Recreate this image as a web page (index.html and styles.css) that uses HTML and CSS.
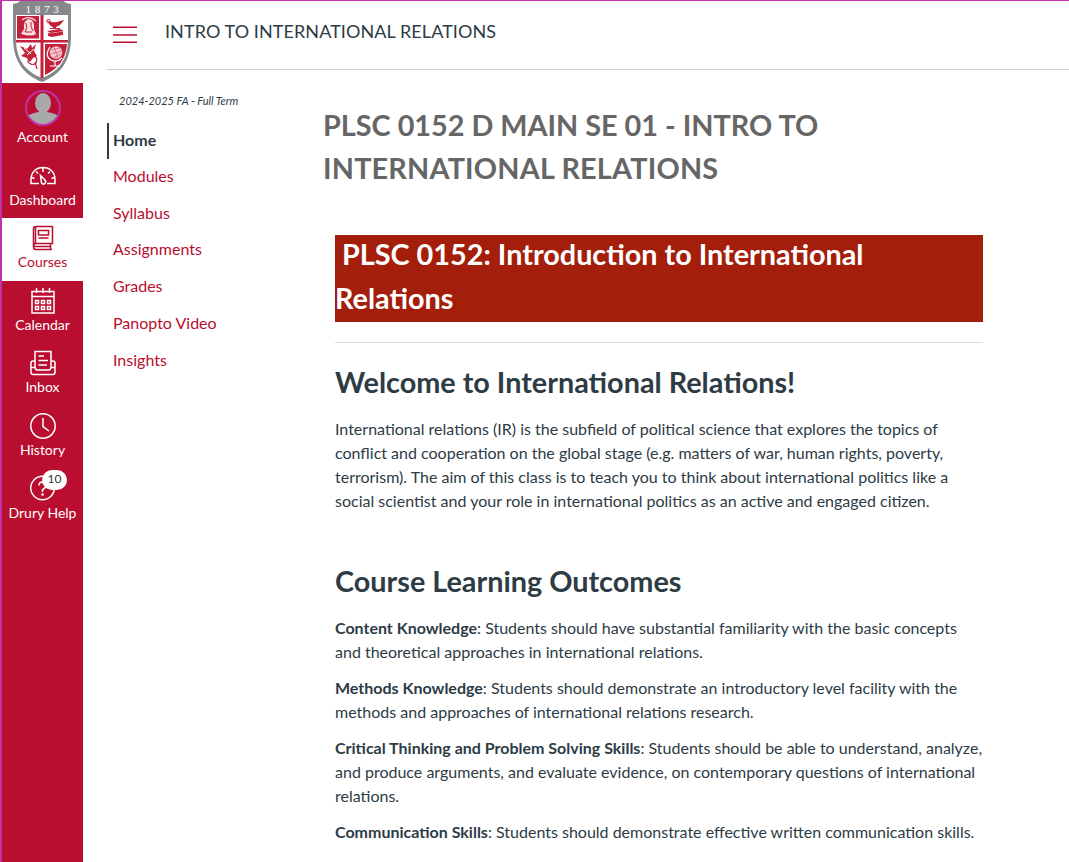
FILE: index.html
```html
<!DOCTYPE html>
<html lang="en">
<head>
<meta charset="utf-8">
<title>INTRO TO INTERNATIONAL RELATIONS</title>
<link rel="stylesheet" href="styles.css">
</head>
<body>
<div class="app">
  <nav class="global-nav">
    <a class="logo">
      <svg width="60" height="82" viewBox="0 0 60 82">
        <path d="M1 3Q6 3 9-1H51Q54 3 59 3V36C59 62 47 74 30 81C13 74 1 62 1 36Z" fill="#87888c"/>
        <path d="M4 14H56V38C56 59 46 71 30 77C14 71 4 59 4 38Z" fill="#fff"/>
        <path d="M5 15H27V37.500H5ZM33 43H55C54 58 46 68 33 74Z" fill="#c3203a"/>
        <path d="M28.500 14H31.500V77H28.500ZM4 39H56V41.500H4Z" fill="#c3203a"/>
        <path d="M9 33L12 28Q11 19 17 18Q23 19 22 28L24 33Q20 36 9 33Z" fill="#f8dce0"/>
        <path d="M10 19Q17 14 24 20M14 22Q16 27 13 31H21Q18 27 19 22" fill="none" stroke="#f8dce0" stroke-width="1.2"/>
        <path d="M14 22Q16 27 13 31H20M19 21Q18 26 21 30" fill="none" stroke="#c3203a"/>
        <path d="M36 20Q39 22 45 21L52 19Q50 22 48 24L44 26V27H48V28H38V27H41V26Q37 25 36 20ZM35 30L48 28L52 30L39 32ZM36 33L51 31V34L40 36L36 35Z" fill="#c3203a"/>
        <path d="M36 32L39 33L51 31" fill="none" stroke="#c3203a"/>
        <circle cx="36.500" cy="20" r="1.700" fill="none" stroke="#c3203a"/>
        <path d="M8 45L15 48L19 43L20 47L24 43L22 50L25 55L21 57L18 61L15 57L9 55L13 52Z" fill="#c3203a"/>
        <path d="M20 54Q27 56 24 62Q21 65 17 62Q15 60 17 57M23 61L25 68" fill="none" stroke="#c3203a" stroke-width="1.2"/>
        <path d="M12 47L19 53M15 54L22 48" stroke="#fff"/>
        <circle cx="44" cy="51.500" r="6.300" fill="#f3c9d0"/>
        <path d="M39 49L48 47M38.500 53L50 50M41 57L49 53M42 46L46 57" fill="none" stroke="#c3203a" stroke-width=".5"/>
        <path d="M38 46Q32 55 39 59Q45 62 50 57M43 60V65M38 65H48" fill="none" stroke="#fff" stroke-width="1.200"/>
        <text x="32" y="12" text-anchor="middle" class="logo-year">1873</text>
      </svg>
    </a>
    <a class="nav-item account">
      <svg width="36" height="36" viewBox="0 0 36 36">
        <defs><clipPath id="avatar"><circle cx="18" cy="18" r="17"/></clipPath></defs>
        <g clip-path="url(#avatar)" fill="#a9a9a9"><ellipse cx="18" cy="13" rx="8" ry="10"/><path d="M14 18H22V22Q33 24 34 27V36H2V27Q3 24 14 22Z"/></g>
        <circle cx="18" cy="18" r="17" fill="none" stroke="#bf32a4" stroke-width="2"/>
      </svg>
      <span>Account</span>
    </a>
    <a class="nav-item">
      <svg class="icon" width="26" height="26" viewBox="0 0 26 26">
        <path d="M9 21.500H1V17.500C1 10 6 5.500 13 5.500S25 10 25 17.500V21.500H17M13 6V10M6 9.500L8 11.500M20 9.500L18 11.500M2 15.500L4.500 16.500M24 15.500L21.500 16.500M10.500 13.500L15 18C17 21 13.500 23.500 11.500 21Z"/>
      </svg>
      <span>Dashboard</span>
    </a>
    <a class="nav-item active">
      <svg class="icon" width="26" height="26" viewBox="0 0 26 26">
        <path d="M22.500 1.500H6Q3.500 1.500 3.500 4V22Q3.500 24.500 6 24.500H22M5.500 1.500V18.500M6 18.500H22.500V1M6 18.500Q3.500 18.500 3.500 21.500M4 21.500H20M20.500 18.500V24.500M8.500 5.500H18.500V10H8.500ZM8.500 13H18.500"/>
      </svg>
      <span>Courses</span>
    </a>
    <a class="nav-item">
      <svg class="icon" width="26" height="26" viewBox="0 0 26 26">
        <path d="M2 3.500H24V25H2ZM2 8.500H24M6.500 0V5M13 0V5M19.500 0V5M5.500 12.500H8.500V15.500H5.500ZM11.500 12.500H14.500V15.500H11.500ZM17.500 12.500H20.500V15.500H17.500ZM5.500 18.500H8.500V21.500H5.500ZM11.500 18.500H14.500V21.500H11.500ZM17.500 18.500H20.500V21.500H17.500Z"/>
      </svg>
      <span>Calendar</span>
    </a>
    <a class="nav-item">
      <svg class="icon" width="26" height="26" viewBox="0 0 26 26">
        <path d="M5 17V1.500H21V17M5 11H3Q1 11 1 13V22Q1 24.500 3 24.500H23Q25 24.500 25 22V13Q25 11 23 11H21M1 17.500H5Q5.500 20 7.500 20H18.500Q20.500 20 21 17.500H25M8.500 6H14M8.500 10.500H18M8.500 15H17"/>
      </svg>
      <span>Inbox</span>
    </a>
    <a class="nav-item">
      <svg class="icon" width="26" height="26" viewBox="0 0 26 26">
        <circle cx="13" cy="13" r="12.200"/><path d="M13 5V13.500L19 18"/>
      </svg>
      <span>History</span>
    </a>
    <a class="nav-item help">
      <svg class="icon" width="26" height="26" viewBox="0 0 26 26">
        <circle cx="12.500" cy="13" r="11.800"/><path d="M9 10.500Q9 7 12.500 7T16 10.500Q16 12.500 14 13.500T12.500 16.500V17"/><circle class="dot" cx="12.500" cy="19.500" r="1.300"/>
      </svg>
      <span>Drury Help</span>
      <b class="badge">10</b>
    </a>
  </nav>
  <div class="page">
    <header class="topbar">
      <svg class="menu" width="24" height="18" viewBox="0 0 24 18">
        <path d="M0 1.200H24M0 9H24M0 16.200H24"/>
      </svg>
      <span class="crumb">INTRO TO INTERNATIONAL RELATIONS</span>
    </header>
    <div class="columns">
      <aside class="course-nav">
        <div class="term">2024-2025 FA - Full Term</div>
        <a class="current">Home</a>
        <a>Modules</a>
        <a>Syllabus</a>
        <a>Assignments</a>
        <a>Grades</a>
        <a>Panopto Video</a>
        <a>Insights</a>
      </aside>
      <main class="content">
        <h1 class="course-title">PLSC 0152 D MAIN SE 01 - INTRO TO <span class="title-end">INTERNATIONAL RELATIONS</span></h1>
        <div class="wiki">
          <div class="banner"><h2>&nbsp;PLSC 0152: Introduction to International Relations</h2></div>
          <hr>
          <h2>Welcome to International Relations!</h2>
          <p>International relations (IR) is the subfield of political science that explores the topics of conflict and cooperation on the global stage (e.g. matters of war, human rights, poverty, terrorism). The aim of this class is to teach you to think about international politics like a social scientist and your role in international politics as an active and engaged citizen.</p>
          <h2 class="outcomes">Course Learning Outcomes</h2>
          <p><strong>Content Knowledge</strong>: Students should have substantial familiarity with the basic concepts and theoretical approaches in international relations.</p>
          <p><strong>Methods Knowledge</strong>: Students should demonstrate an introductory level facility with the methods and approaches of international relations research.</p>
          <p><strong>Critical Thinking and Problem Solving Skills</strong>: Students should be able to understand, analyze, and produce arguments, and evaluate evidence, on contemporary questions of international relations.</p>
          <p><strong>Communication Skills</strong>: Students should demonstrate effective written communication skills.</p>
        </div>
      </main>
    </div>
  </div>
</div>
</body>
</html>
```
FILE: styles.css
```css
* { box-sizing: border-box; }
body { margin: 0; font-family: Lato, sans-serif; font-size: 16px; line-height: 24px; color: #2d3b45; background: #fff; }
.app { display: flex; height: 862px; overflow: hidden; border-left: 2px solid #bf32a4; border-top: 1px solid #bf32a4; }

.global-nav { width: 81px; flex: none; background: #b90e2f; }
.logo { display: block; height: 82px; padding-left: 10px; background: #fff; }
.logo svg { display: block; }
.logo-year { font: 11px "Liberation Serif", serif; letter-spacing: 3.8px; fill: #fff; }
.nav-item { position: relative; display: flex; flex-direction: column; align-items: center; height: 62.6px; padding-top: 7px; color: #fff; font-size: 14px; line-height: 17px; white-space: nowrap; }
.nav-item span { margin-top: 2.2px; }
.nav-item.account { height: 72.4px; }
.nav-item.account span { margin-top: 2px; }
.icon { fill: none; stroke: currentColor; stroke-width: 1.5; }
.icon .dot { fill: currentColor; stroke: none; }
.nav-item.active { background: #fff; color: #b90e2f; }
.badge { position: absolute; left: 40px; top: 1.6px; width: 25px; height: 20px; border-radius: 10px; background: #fff; color: #2d3b45; font-size: 12px; font-weight: 400; line-height: 18px; text-align: center; }

.page { flex: 1; padding-left: 24px; }
.topbar { display: flex; height: 69px; padding: 18px 0 0 6px; border-bottom: 1px solid #c7cdd1; }
.menu { margin-top: 7px; stroke: #b90e2f; stroke-width: 1.6; }
.crumb { margin-left: 28px; font-size: 18px; letter-spacing: .08px; }
.columns { display: flex; }
.course-nav { width: 192px; flex: none; padding-top: 22px; }
.term { padding-left: 12px; font-size: 11px; font-style: italic; line-height: 18px; margin-bottom: 13px; }
.course-nav a { display: block; height: 36px; margin-bottom: .7px; padding-left: 6px; line-height: 32px; color: #b90e2f; }
.course-nav .current { margin-bottom: 1.1px; padding-left: 4px; border-left: 2px solid #2d3b45; color: #2d3b45; font-weight: bold; line-height: 33px; }
.content { padding: 34px 0 0 24px; width: 684px; }
h1, h2 { margin: 0; font-size: 28.8px; line-height: 43.2px; font-weight: bold; }
.course-title { color: #666; }
.title-end { letter-spacing: .2px; }
.wiki { padding: 45px 0 0 12px; width: 660px; }
.banner { display: flow-root; height: 87px; background: #a31f0b; color: #fff; }
.banner h2 { margin-top: -2px; }
hr { height: 1px; margin: 20px 0 18px; border: 0; background: #ddd; }
.outcomes { margin-top: 47px; }
.outcomes + p { margin-top: 13px; }
p { margin: 12px 0; }
```
